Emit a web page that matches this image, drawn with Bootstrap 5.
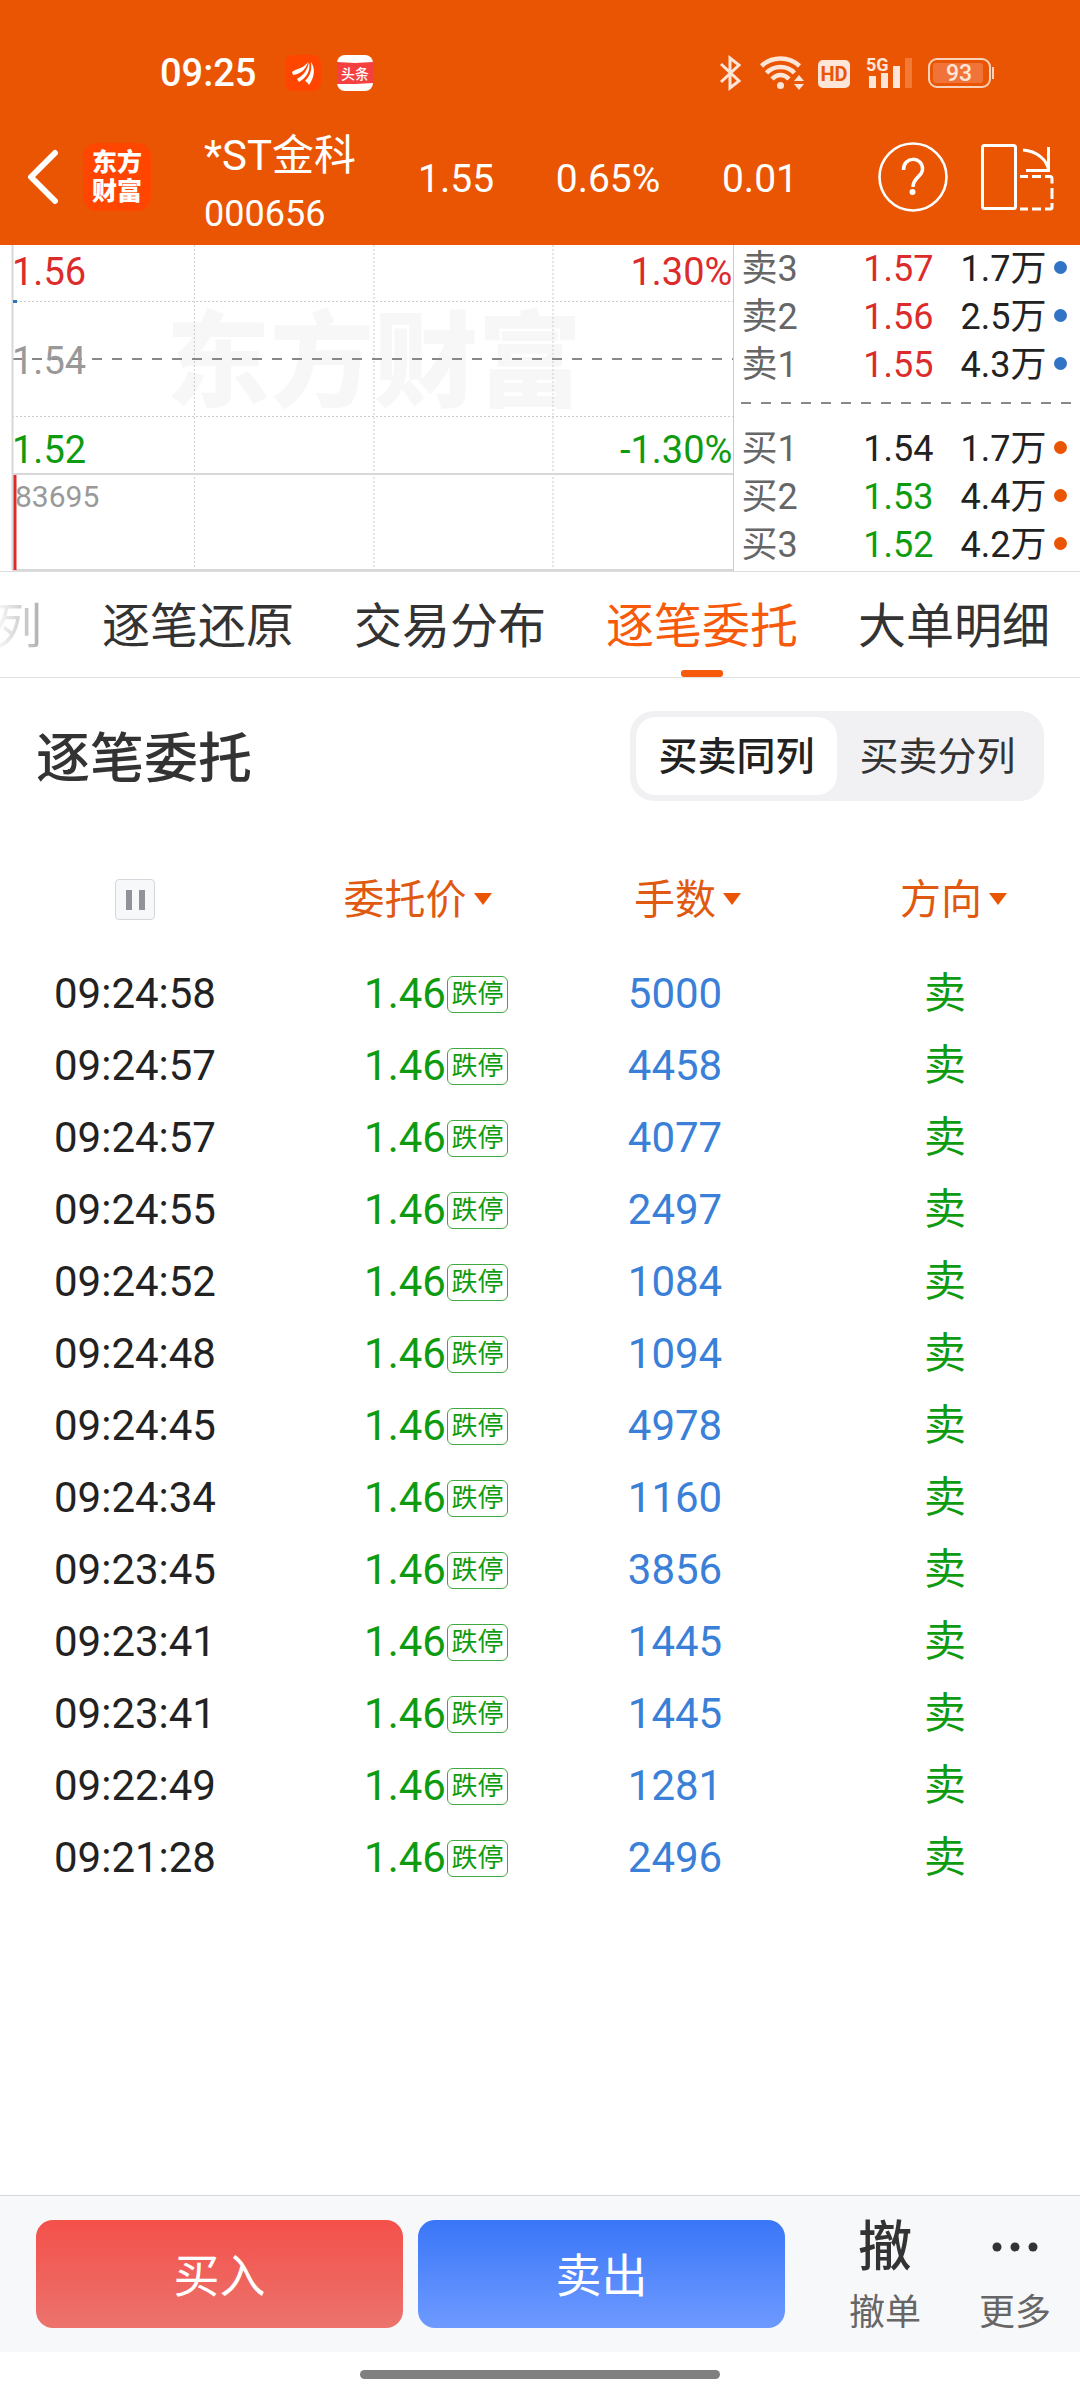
<!DOCTYPE html>
<html lang="zh-CN">
<head>
<meta charset="utf-8">
<meta name="viewport" content="width=device-width, initial-scale=1">
<title>*ST金科 000656 逐笔委托</title>
<link rel="stylesheet" href="https://cdn.jsdelivr.net/npm/bootstrap@5.3.0/dist/css/bootstrap.min.css">
<style>
  :root {
    --brand: #ea5504;
    --rise: #dc2b2b;
    --fall: #0f9b0f;
    --ink: #222;
    --muted: #666;
  }
  body {
    font-family: Roboto, "Noto Sans CJK SC", sans-serif;
    color: var(--ink);
    background: #fff;
  }
  a { text-decoration: none; color: inherit; }
  .rise { color: var(--rise); }
  .fall { color: var(--fall); }

  /* top bar */
  .app-top { background: var(--brand); color: #fff; }
  .status-line { height: 108px; padding: 38px 85px 0 160px; }
  .status-line .clock { font-size: 38px; line-height: 70px; font-weight: 500; }
  .status-line svg { display: block; }
  .app-mark { margin: 0 16px 0 24px; }
  .status-icons { gap: 16px; }
  .stock-line { height: 137px; padding: 0 26px 0 27px; }
  .stock-line .btn { color: #fff; }
  .brand-logo {
    width: 68px; height: 68px; border-radius: 14px; background: #ff4600;
    font-size: 25px; line-height: 29px; font-weight: 900;
  }
  .stock-name { padding-top: 16px; line-height: 58px; font-size: 42px; margin-left: 53px; }
  .stock-code { font-size: 36px; line-height: 58px; }
  .quote-figures { font-size: 39px; margin: 0 80px 0 62px; padding-top: 6px; }
  .rotate-icon { margin-left: 33px; }

  /* intraday chart */
  .market { border-bottom: 1px solid #ddd; }
  .chart-side { flex: 0 0 68%; padding-left: 12px; border-right: 1px solid #ccc; font-size: 38px; line-height: 46px; }
  .plot { width: 100%; height: 100%; }
  .price-pane { height: 230px; padding: 4px 1px 2px 0; }
  .mid-price { color: #999; }
  .volume-pane { height: 96px; font-size: 30px; line-height: 34px; padding: 5px 4px 0 3px; color: #999; }

  /* order book */
  .book { table-layout: fixed; font-size: 36px; line-height: 48px; margin: 0; color: var(--ink); }
  .book th, .book td { padding: 0; font-weight: 400; vertical-align: middle; }
  .book th { padding-left: 7px; color: var(--muted); }
  .book .col-side { width: 80px; }
  .book .col-price { width: 119px; }
  .book .col-vol { width: 113px; }
  .book .divider td { height: 36px; line-height: 0; vertical-align: top; padding: 13px 4px 0 7px; }
  .dash-line { height: 2px; background: repeating-linear-gradient(90deg, #888 0 10px, transparent 10px 20px); }
  .pip { display: block; width: 13px; height: 13px; border-radius: 50%; margin-left: 8px; margin-bottom: 4px; background: var(--brand); }
  .pip-sell { background: #3173c4; }

  /* tabs */
  .detail-tabs { height: 106px; gap: 60px; padding-right: 30px; border-bottom: 1px solid #e2e2e2; font-size: 48px; line-height: 110px; color: #333; }
  .detail-tabs .active { color: #f75a0a; position: relative; }
  .detail-tabs .active::after { content: ""; position: absolute; left: 50%; bottom: 0; width: 42px; height: 7px; margin-left: -21px; border-radius: 3px; background: #f75a0a; }
  .fade-tab { opacity: .4; -webkit-mask-image: linear-gradient(90deg, transparent, #000); mask-image: linear-gradient(90deg, transparent, #000); }

  /* section heading */
  .section-head { padding: 33px 36px 0; }
  .section-head h1 { font-size: 54px; line-height: 82px; padding-top: 8px; font-weight: 500; color: #333; }
  .segment { background: #f1f1f4; border-radius: 24px; padding: 6px; }
  .segment .btn { border: 0; border-radius: 20px; width: 201px; padding: 2px 0 0; font-size: 39px; line-height: 76px; color: #333; white-space: nowrap; }
  .segment .btn.active { background: #fff; color: #222; font-weight: 500; }

  /* order list */
  .ticks { table-layout: fixed; margin: 40px 0 0; font-size: 42px; line-height: 72px; text-align: center; color: var(--ink); }
  .ticks th, .ticks td { padding: 0; font-weight: 400; vertical-align: middle; }
  .ticks thead th { height: 117px; }
  .sort-btn { border: 0; background: none; padding: 0; color: #df5a10; font-size: 41px; line-height: 60px; position: relative; }
  .sort-btn::after { content: ""; position: absolute; left: 100%; top: 23px; margin-left: 7px; border: 9px solid transparent; border-top: 12px solid #ea5504; border-bottom: 0; }
  .ticks th:last-child { padding-right: 8px; }
  .pause-btn { width: 40px; height: 41px; border: 1px solid #d5d7dc; border-radius: 4px; background: #f7f8fa; padding: 0; }
  .price-cell { position: relative; }
  .limit-tag { position: absolute; left: 100%; top: 7px; margin-left: 1px; height: 37px; width: 61px; border: 1px solid #3fa93f; border-radius: 6px; font-size: 26px; line-height: 35px; white-space: nowrap; }
  .lots { color: #3a7fd8; }

  /* bottom bar */
  .trade-bar { background: #f7f8fa; border-top: 1px solid #d8d8d8; padding: 24px 0 24px 36px; }
  .trade-btns { gap: 15px; margin-right: 35px; }
  .trade-btns .btn { border: 0; border-radius: 17px; color: #fff; font-size: 46px; line-height: 104px; padding: 4px 0 0; flex: 1 1 0; }
  .buy-btn { background: linear-gradient(#f4504a, #ec736d); }
  .sell-btn { background: linear-gradient(#3a76f8, #6e9aff); }
  .tool-btn { width: 130px; border: 0; background: none; padding: 0; color: var(--muted); font-size: 36px; line-height: 30px; }
  .tool-glyph { font-size: 54px; line-height: 56px; height: 78px; color: #333; font-weight: 500; display: block; }
  .home-zone { height: 48px; padding-bottom: 3px; }
  .home-pill { flex: 0 0 360px; height: 9px; border-radius: 5px; background: #808080; }
</style>
</head>
<body class="d-flex flex-column min-vh-100">

<header class="app-top">
  <div class="status-line d-flex align-items-center justify-content-between">
    <div class="d-flex align-items-center">
      <span class="clock">09:25</span>
      <svg class="app-mark" width="41" height="36" viewBox="-5 0 41 36" aria-hidden="true">
        <rect width="36" height="36" rx="8" fill="#ff4600"/>
        <g fill="#fff">
          <path d="M7 17C12 13 18 14 23 7C21 15 15 19 8 20Z"/>
          <path d="M12 24C17 21 22 17 24 7C26 16 21 23 14 27Z"/>
          <path d="M20 26C25 21 27 15 26 7C31 14 29 23 24 30C23 28 22 27 20 26Z"/>
        </g>
      </svg>
      <svg width="36" height="36" viewBox="0 0 36 36" aria-hidden="true">
        <rect width="36" height="36" rx="8" fill="#fff"/>
        <path d="M0 7L18 8L36 7V28L18 29L0 29Z" fill="#f5403f"/>
        <text x="18" y="24" font-size="14" font-weight="500" fill="#fff" text-anchor="middle">头条</text>
      </svg>
    </div>
    <div class="status-icons d-flex align-items-center">
      <svg width="24" height="36" viewBox="0 0 24 36" fill="none" stroke="#fde5d8" stroke-width="3" aria-label="蓝牙">
        <path d="M1 9L19 26L10 33V3L19 10L1 27"/>
      </svg>
      <svg width="42" height="36" viewBox="0 0 42 36" overflow="visible" aria-label="无线网络">
        <g fill="none" stroke="#fde5d8" stroke-width="4.500">
          <path d="M1.500 11C12 1 29 1 39.500 11"/>
          <path d="M6.500 18C14 10 27 10 34.500 18"/>
          <path d="M12 24C17 18.500 24 18.500 29 24"/>
        </g>
        <circle cx="20.500" cy="30.500" r="3.500" fill="#fde5d8"/>
        <path d="M34 26L39 20L44 26ZM34 29L39 35L44 29Z" fill="#fde5d8"/>
      </svg>
      <svg width="32" height="36" viewBox="0 0 32 36">
        <rect y="5" width="32" height="28" rx="5" fill="#fde5d8"/>
        <text x="16" y="26" font-size="20" font-weight="700" fill="#ea5504" text-anchor="middle">HD</text>
      </svg>
      <svg width="46" height="36" viewBox="0 0 46 36">
        <text x="0" y="16" font-size="18" font-weight="700" fill="#fde5d8">5G</text>
        <path d="M3 21h7v12h-7zM15 18h7v15h-7zM27 11h7v22h-7z" fill="#fde5d8"/>
        <path d="M39 3h7v30h-7z" fill="#f17a36"/>
      </svg>
      <svg width="67" height="36" viewBox="0 0 67 36">
        <rect x="1" y="4" width="61" height="28" rx="8" fill="none" stroke="#fbd2ba" stroke-width="2"/>
        <rect x="5" y="8" width="50" height="20" rx="3" fill="#f0743a"/>
        <path d="M64 12h2v12h-2z" fill="#fbd2ba"/>
        <text x="31" y="26" font-size="23" font-weight="500" fill="#fde5d8" text-anchor="middle">93</text>
      </svg>
    </div>
  </div>

  <div class="stock-line d-flex align-items-center">
    <a href="#" class="flex-shrink-0" aria-label="返回">
      <svg class="d-block" width="32" height="56" viewBox="0 0 32 56" fill="none" stroke="#fff" stroke-width="6" stroke-linecap="round" stroke-linejoin="round"><path d="M28 4L4 28L28 52"/></svg>
    </a>
    <a href="#" class="brand-logo ms-4 flex-shrink-0 d-flex align-items-center justify-content-center text-center">东方<br>财富</a>
    <div class="stock-name">
      <div>*ST金科</div>
      <div class="stock-code">000656</div>
    </div>
    <div class="quote-figures d-flex justify-content-between flex-grow-1">
      <span>1.55</span><span>0.65%</span><span>0.01</span>
    </div>
    <button class="btn p-0 border-0" aria-label="帮助">
      <svg class="d-block" width="70" height="70" viewBox="0 0 70 70" fill="none" stroke="#fff">
        <circle cx="35" cy="35" r="33.500" stroke-width="2.600"/>
        <path d="M25.500 28C25.500 14 44.500 14 44.500 27C44.500 35 35 35 35 45" stroke-width="3.500"/>
        <circle cx="34.500" cy="50" r="3" fill="#fff" stroke="none"/>
      </svg>
    </button>
    <button class="btn p-0 border-0 ms-auto" aria-label="横屏">
      <svg class="rotate-icon d-block" width="73" height="68" viewBox="0 0 73 68" fill="none" stroke="#fff" stroke-width="3">
        <rect x="1.500" y="2.500" width="33" height="63" rx="2"/>
        <path d="M42 7C56 8 66 17 67.500 27M67.500 4V27.500H45"/>
        <path d="M39 33.500h8M51 33.500h9M64 33.500h5q2 0 2 2v5M71 45v11M71 60v4q0 2-2 2h-5M60 66h-9M47 66h-8"/>
      </svg>
    </button>
  </div>
</header>

<section class="market d-flex">
  <div class="chart-side position-relative d-flex flex-column">
    <svg class="plot position-absolute top-0 start-0" aria-hidden="true">
      <text x="51%" y="154" font-size="104" font-weight="900" fill="#f7f7f7" text-anchor="middle">东方财富</text>
      <g stroke="#ccc" stroke-dasharray="2 2">
        <path d="M12 56.500H4000M12 171.500H4000"/>
        <line x1="26.500%" x2="26.500%" y2="325"/>
        <line x1="51%" x2="51%" y2="325"/>
        <line x1="75.400%" x2="75.400%" y2="325"/>
      </g>
      <path d="M12 114H4000" stroke="#888" stroke-width="2" stroke-dasharray="10 10"/>
      <path d="M12 229H4000M12 325H4000M12.500 0V325" stroke="#d8d8d8" stroke-width="2"/>
      <path d="M15 230V325" stroke="#dc2b2b" stroke-width="3"/>
      <path d="M13 56.500h4" stroke="#3173c4" stroke-width="3"/>
    </svg>
    <div class="price-pane position-relative d-flex flex-column justify-content-between">
      <div class="d-flex justify-content-between rise"><span>1.56</span><span>1.30%</span></div>
      <div class="mid-price">1.54</div>
      <div class="d-flex justify-content-between fall"><span>1.52</span><span>-1.30%</span></div>
    </div>
    <div class="volume-pane position-relative">83695</div>
  </div>
  <div class="flex-grow-1">
    <table class="book w-100">
      <colgroup><col class="col-side"><col class="col-price"><col class="col-vol"><col></colgroup>
      <tbody>
        <tr><th scope="row">卖3</th><td class="text-end rise">1.57</td><td class="text-end">1.7万</td><td><span class="pip pip-sell"></span></td></tr>
        <tr><th scope="row">卖2</th><td class="text-end rise">1.56</td><td class="text-end">2.5万</td><td><span class="pip pip-sell"></span></td></tr>
        <tr><th scope="row">卖1</th><td class="text-end rise">1.55</td><td class="text-end">4.3万</td><td><span class="pip pip-sell"></span></td></tr>
        <tr class="divider"><td colspan="4"><div class="dash-line"></div></td></tr>
        <tr><th scope="row">买1</th><td class="text-end">1.54</td><td class="text-end">1.7万</td><td><span class="pip"></span></td></tr>
        <tr><th scope="row">买2</th><td class="text-end fall">1.53</td><td class="text-end">4.4万</td><td><span class="pip"></span></td></tr>
        <tr><th scope="row">买3</th><td class="text-end fall">1.52</td><td class="text-end">4.2万</td><td><span class="pip"></span></td></tr>
      </tbody>
    </table>
  </div>
</section>

<nav class="detail-tabs d-flex justify-content-end overflow-hidden text-nowrap">
  <a href="#" class="fade-tab">列</a>
  <a href="#">逐笔还原</a>
  <a href="#">交易分布</a>
  <a href="#" class="active" aria-current="page">逐笔委托</a>
  <a href="#">大单明细</a>
</nav>

<main>
  <div class="section-head d-flex justify-content-between align-items-center">
    <h1 class="m-0">逐笔委托</h1>
    <div class="segment d-flex" role="group" aria-label="显示方式">
      <button class="btn active" aria-pressed="true">买卖同列</button>
      <button class="btn" aria-pressed="false">买卖分列</button>
    </div>
  </div>

  <table class="ticks w-100">
    <thead>
      <tr>
        <th scope="col"><button class="pause-btn d-block mx-auto" aria-label="暂停"><svg class="d-block mx-auto" width="20" height="20" viewBox="0 0 20 20" fill="#929298"><path d="M1 0h6v20h-6zM14 0h6v20h-6z"/></svg></button></th>
        <th scope="col"><button class="sort-btn">委托价</button></th>
        <th scope="col"><button class="sort-btn">手数</button></th>
        <th scope="col"><button class="sort-btn">方向</button></th>
      </tr>
    </thead>
    <tbody>
      <tr><td>09:24:58</td><td class="fall"><span class="price-cell">1.46<span class="limit-tag">跌停</span></span></td><td class="lots">5000</td><td class="fall">卖</td></tr>
      <tr><td>09:24:57</td><td class="fall"><span class="price-cell">1.46<span class="limit-tag">跌停</span></span></td><td class="lots">4458</td><td class="fall">卖</td></tr>
      <tr><td>09:24:57</td><td class="fall"><span class="price-cell">1.46<span class="limit-tag">跌停</span></span></td><td class="lots">4077</td><td class="fall">卖</td></tr>
      <tr><td>09:24:55</td><td class="fall"><span class="price-cell">1.46<span class="limit-tag">跌停</span></span></td><td class="lots">2497</td><td class="fall">卖</td></tr>
      <tr><td>09:24:52</td><td class="fall"><span class="price-cell">1.46<span class="limit-tag">跌停</span></span></td><td class="lots">1084</td><td class="fall">卖</td></tr>
      <tr><td>09:24:48</td><td class="fall"><span class="price-cell">1.46<span class="limit-tag">跌停</span></span></td><td class="lots">1094</td><td class="fall">卖</td></tr>
      <tr><td>09:24:45</td><td class="fall"><span class="price-cell">1.46<span class="limit-tag">跌停</span></span></td><td class="lots">4978</td><td class="fall">卖</td></tr>
      <tr><td>09:24:34</td><td class="fall"><span class="price-cell">1.46<span class="limit-tag">跌停</span></span></td><td class="lots">1160</td><td class="fall">卖</td></tr>
      <tr><td>09:23:45</td><td class="fall"><span class="price-cell">1.46<span class="limit-tag">跌停</span></span></td><td class="lots">3856</td><td class="fall">卖</td></tr>
      <tr><td>09:23:41</td><td class="fall"><span class="price-cell">1.46<span class="limit-tag">跌停</span></span></td><td class="lots">1445</td><td class="fall">卖</td></tr>
      <tr><td>09:23:41</td><td class="fall"><span class="price-cell">1.46<span class="limit-tag">跌停</span></span></td><td class="lots">1445</td><td class="fall">卖</td></tr>
      <tr><td>09:22:49</td><td class="fall"><span class="price-cell">1.46<span class="limit-tag">跌停</span></span></td><td class="lots">1281</td><td class="fall">卖</td></tr>
      <tr><td>09:21:28</td><td class="fall"><span class="price-cell">1.46<span class="limit-tag">跌停</span></span></td><td class="lots">2496</td><td class="fall">卖</td></tr>
    </tbody>
  </table>
</main>

<footer class="mt-auto">
  <div class="trade-bar d-flex">
    <div class="trade-btns d-flex flex-grow-1">
      <button class="btn buy-btn">买入</button>
      <button class="btn sell-btn">卖出</button>
    </div>
    <button class="tool-btn"><span class="tool-glyph">撤</span>撤单</button>
    <button class="tool-btn"><span class="tool-glyph"><svg class="d-block mx-auto" width="46" height="54" viewBox="0 0 46 54" fill="#333" aria-hidden="true"><circle cx="5" cy="27" r="4.500"/><circle cx="23" cy="27" r="4.500"/><circle cx="41" cy="27" r="4.500"/></svg></span>更多</button>
  </div>
  <div class="home-zone d-flex justify-content-center align-items-center"><span class="home-pill"></span></div>
</footer>

<script src="https://cdn.jsdelivr.net/npm/bootstrap@5.3.0/dist/js/bootstrap.bundle.min.js"></script>
</body>
</html>
